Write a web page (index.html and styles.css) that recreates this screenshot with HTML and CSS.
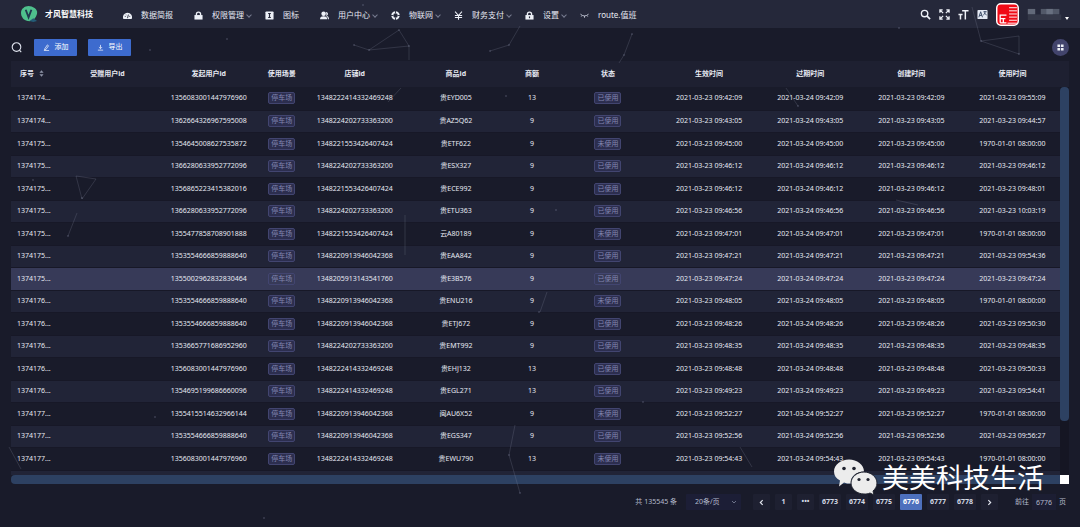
FILE: index.html
```html
<!DOCTYPE html>
<html lang="zh-CN">
<head>
<meta charset="utf-8">
<title>才风智慧科技</title>
<link rel="stylesheet" href="styles.css">
</head>
<body>
<div class="page">
  <header class="topbar">
    <div class="brand">
      <svg class="brand-logo" viewBox="0 0 20 18"><path d="M1 7C1 3 5 0 9 0s10 3 9 8-5 9-10 8S1 11 1 7z" fill="#4fc08d"/><path d="M14 13l4 3-4 1-4-1z" fill="#245c77"/><path d="M6 4l3 8 3-8" fill="none" stroke="#22384f" stroke-width="2"/></svg>
      <span>才风智慧科技</span>
    </div>
    <nav class="menu">
      <a class="menu-item" href="#"><svg class="icon" viewBox="0 0 10 10"><path d="M.5 9a5 5 0 1 1 9 0z" fill="#eef1f8"/><path d="M5 8l1-4M2 6h1M7 6h1M3 3.500l.7.700" stroke="#25283a" stroke-width="1"/></svg><span>数据简报</span></a>
      <a class="menu-item sub" href="#"><svg class="icon" viewBox="0 0 10 10"><path d="M.5 4.500h9v5h-9z" fill="#eef1f8"/><path d="M2.700 5V3.500a2.300 2.300 0 0 1 4.600 0V5" fill="none" stroke="#eef1f8" stroke-width="1.500"/></svg><span>权限管理</span><i class="chevron"></i></a>
      <a class="menu-item" href="#"><svg class="icon" viewBox="0 0 10 10"><rect x=".5" y=".5" width="9" height="9" rx="1" fill="#eef1f8"/><path d="M3.500 2.800h3M5 3v4M3.500 7.200h3" stroke="#25283a" stroke-width="1.300"/></svg><span>图标</span></a>
      <a class="menu-item sub" href="#"><svg class="icon" viewBox="0 0 10 10" fill="#eef1f8"><circle cx="4" cy="3" r="2.500"/><path d="M0 9.300c0-3 2-3.600 4-3.600s4 .6 4 3.600zM6.500 1a2.200 2.200 0 0 1 .8 4.300C9 5.800 10 6.500 10 9.300H8.800c0-2-1-3-2-3.800C7.500 4 7 2.500 6.500 1z"/></svg><span>用户中心</span><i class="chevron"></i></a>
      <a class="menu-item sub" href="#"><svg class="icon" viewBox="0 0 10 10"><circle cx="5" cy="5" r="3.600" fill="none" stroke="#eef1f8" stroke-width="2.200"/><path d="M5 0v2.500M5 7.500V10M0 5h2.500M7.500 5H10" stroke="#25283a" stroke-width="1"/></svg><span>物联网</span><i class="chevron"></i></a>
      <a class="menu-item sub" href="#"><svg class="icon" viewBox="0 0 10 10"><path d="M1.200.8L5 5l3.800-4.200M5 5v4.800M1 5h8M1 7.300h8" fill="none" stroke="#eef1f8" stroke-width="1.200"/></svg><span>财务支付</span><i class="chevron"></i></a>
      <a class="menu-item sub" href="#"><svg class="icon" viewBox="0 0 10 10"><path d="M.5 4.500h9v5h-9z" fill="#eef1f8"/><path d="M2.700 5V3.500a2.300 2.300 0 0 1 4.600 0V5" fill="none" stroke="#eef1f8" stroke-width="1.500"/><path d="M5 6v2" stroke="#25283a" stroke-width="1.300"/></svg><span>设置</span><i class="chevron"></i></a>
      <a class="menu-item" href="#"><svg class="icon" viewBox="0 0 10 10"><path d="M.5 3.500Q5 7.500 9.500 3.500M5 5.500v2M2.200 5l-.8 1.200M7.800 5l.8 1.200" fill="none" stroke="#c5c9d8" stroke-width="1"/></svg><span>route.值班</span></a>
    </nav>
    <div class="tools">
      <button class="tool" aria-label="搜索"><svg viewBox="0 0 12 12" fill="none" stroke="#eef1f8"><circle cx="5" cy="5" r="3.500" stroke-width="1.500"/><path d="M7.500 7.500L11 11" stroke-width="1.800"/></svg></button>
      <button class="tool" aria-label="全屏"><svg viewBox="0 0 12 12" fill="none" stroke="#eef1f8" stroke-width="1.400"><path d="M1 4V1h3M8 1h3v3M11 8v3H8M4 11H1V8M1 1l3.500 3.500M11 1L7.500 4.500M11 11L7.500 7.500M1 11l3.500-3.500"/></svg></button>
      <button class="tool" aria-label="字号"><svg viewBox="0 0 12 12" fill="none" stroke="#eef1f8" stroke-width="1.600"><path d="M4.500 2h7M8 2v9.500M.5 6h4.500M2.700 6v5.500"/></svg></button>
      <button class="tool" aria-label="语言"><svg viewBox="0 0 12 12"><rect x=".5" y="1" width="11" height="10" rx="1" fill="#e4e9f4"/><path d="M2 9l2-6 2 6M2.800 7h2.400M7 3h3.500M8.700 2.500C8.700 5 8 6 7 6.500M8 4.500l2.500 2" fill="none" stroke="#30415e" stroke-width="1"/></svg></button>
      <svg class="avatar" viewBox="0 0 22 22"><rect x=".7" y=".7" width="20.600" height="20.600" rx="4" fill="#f00a16" stroke="#fff" stroke-width="1.400"/><path d="M4 19V11.500h6M4 15h5M7 15v4M4 19h6" fill="none" stroke="#fff" stroke-width="1.200"/><path d="M12.500 4.500H20M12.500 7.500H20M12.500 10.500H20M12.500 13.500H20M12.500 16.500H20M11 19.300h9" fill="none" stroke="#fff" stroke-width=".9"/></svg>
      <svg class="username" viewBox="0 0 36 14"><path d="M0 1h8v6H0z" fill="#626979"/><path d="M14 1h20v6H14z" fill="#525969"/><path d="M20 1h7v6h-7z" fill="#687080"/><path d="M0 7h36v6H0z" fill="#343848"/></svg>
      <i class="caret"></i>
    </div>
  </header>

  <main class="content">
    <div class="toolbar">
      <button class="find" aria-label="筛选"><svg viewBox="0 0 12 12" fill="none" stroke="#dfe3ee" stroke-width="1.200"><circle cx="6" cy="5.500" r="4.700"/><path d="M9.200 9l2 2"/></svg></button>
      <button class="action"><svg viewBox="0 0 8 8" fill="none" stroke="#fff" stroke-width=".8"><path d="M2 5.500L5 1l1.300 1L3.400 6.300 1.800 6.800zM1 7.500h6"/></svg>添加</button>
      <button class="action"><svg viewBox="0 0 8 8" fill="none" stroke="#fff" stroke-width=".8"><path d="M4 1v4M2.200 3.500L4 5.300l1.800-1.800M1 7h6"/></svg>导出</button>
      <button class="columns" aria-label="列设置"><svg viewBox="0 0 8 8" fill="#eef1f8"><path d="M.5.5h3v3h-3zM4.500.5h3v3h-3zM.5 4.500h3v3h-3zM4.500 4.500h3v3h-3z"/></svg></button>
    </div>

    <div class="grid">
      <div class="grid-view">
        <table class="data">
          <colgroup><col class="c-seq"><col><col><col class="c-scene"><col><col><col class="c-amount"><col><col><col><col><col></colgroup>
          <thead><tr><th class="seq">序号<svg class="sort" viewBox="0 0 6 8" fill="#8f94a8"><path d="M3 0l2.500 3h-5zM3 8l2.500-3h-5z"/></svg></th><th>受赠用户id</th><th>发起用户id</th><th>使用场景</th><th>店铺id</th><th>商品id</th><th>商额</th><th>状态</th><th>生效时间</th><th>过期时间</th><th>创建时间</th><th>使用时间</th></tr></thead>
          <tbody id="rows"></tbody>
        </table>
      </div>
      <div class="track-v"><div class="thumb-v"></div></div>
      <div class="track-h"></div>
      <div class="corner"></div>
    </div>

    <footer class="pager">
      <span class="total">共 135545 条</span>
      <select class="size" aria-label="每页条数"><option>20条/页</option></select>
      <button class="pg narrow" aria-label="上一页"><svg viewBox="0 0 6 6"><path d="M4 1L2 3l2 2"/></svg></button>
      <button class="pg narrow">1</button>
      <button class="pg narrow">•••</button>
      <button class="pg">6773</button>
      <button class="pg">6774</button>
      <button class="pg">6775</button>
      <button class="pg active">6776</button>
      <button class="pg">6777</button>
      <button class="pg">6778</button>
      <button class="pg narrow" aria-label="下一页"><svg viewBox="0 0 6 6"><path d="M2 1l2 2-2 2"/></svg></button>
      <label class="jump">前往<input value="6776">页</label>
    </footer>
  </main>

  <svg class="net" viewBox="0 0 1080 527" preserveAspectRatio="none">
    <path d="M354 45l15 5 30-20 10 16v14M369 50l40-4M490 51l19-6 11-19M632 34l-8 21-5 8M76 75M76 176l20 3-14 20zM77 213l-9 23M972 7l9 34 38-5v18l-38-13M401 88l-13 14M786 88l12 18M405 215v40M547 292l-7 20M515 425l-6 30 11 38M9 447l12 22M740 447l12 20M896 200l22 5"/>
    <g><circle cx="354" cy="45" r="1"/><circle cx="369" cy="50" r="1"/><circle cx="399" cy="30" r="1"/><circle cx="409" cy="46" r="1"/><circle cx="490" cy="51" r="1"/><circle cx="509" cy="45" r="1"/><circle cx="624" cy="55" r="1"/><circle cx="632" cy="34" r="1"/><circle cx="363" cy="5" r="1"/><circle cx="227" cy="39" r="1"/><circle cx="150" cy="50" r="1"/><circle cx="82" cy="198" r="1"/><circle cx="33" cy="180" r="1"/><circle cx="68" cy="236" r="1"/><circle cx="506" cy="96" r="1"/><circle cx="556" cy="210" r="1"/><circle cx="539" cy="312" r="1"/><circle cx="643" cy="402" r="1"/><circle cx="155" cy="417" r="1"/><circle cx="264" cy="518" r="1"/><circle cx="509" cy="455" r="1"/><circle cx="520" cy="493" r="1"/><circle cx="981" cy="41" r="1"/><circle cx="1019" cy="54" r="1"/><circle cx="798" cy="106" r="1"/><circle cx="899" cy="28" r="1"/></g>
  </svg>

  <div class="watermark">
    <svg viewBox="0 0 44 36"><path d="M15 0c8 0 15 5 15 12-8 0-14 5-13 12-3 0-5 0-7-1l-5 4 1-6C2 19 0 16 0 12 0 5 7 0 15 0z" fill="#ececec"/><path d="M30 12.500c7 0 13 5 13 11 0 4-2 6-4 8l1 4-4-2c-2 1-4 1-6 1-7 0-13-5-13-11s6-11 13-11z" fill="#ececec" stroke="#20232f"/><g fill="#20232f"><circle cx="10" cy="9" r="1.800"/><circle cx="20" cy="9" r="1.800"/><circle cx="25" cy="20" r="1.600"/><circle cx="34" cy="20" r="1.600"/></g></svg>
    <span>美美科技生活</span>
  </div>
</div>
<script src="rows.js"></script>
</body>
</html>
```
FILE: styles.css
```css
* { box-sizing: border-box; }
body {
  margin: 0;
  background: #191b2a;
  color: #e6e9f2;
  font: 7px/10px "Noto Sans", "Noto Sans CJK SC", sans-serif;
}
button, select, input { font: inherit; color: inherit; border: 0; margin: 0; padding: 0; background: none; }
svg { display: block; }
.page { position: relative; display: flex; flex-direction: column; height: 100vh; overflow: hidden; }

.topbar { display: flex; align-items: center; height: 28px; flex: none; padding: 0 11px 0 20px; background: #25283a; }
.brand { display: flex; align-items: center; gap: 6px; width: 103px; font-size: 8px; font-weight: 700; color: #fff; white-space: nowrap; }
.brand-logo { width: 19px; height: 17px; }
.menu { display: flex; align-items: center; flex: 1; padding-top: 2px; font-size: 8px; }
.menu-item { display: flex; align-items: center; padding-right: 21px; color: #e6e9f2; text-decoration: none; white-space: nowrap; }
.menu-item.sub { padding-right: 14px; }
.icon { width: 9px; height: 9px; margin-right: 9px; }
.chevron { width: 4px; height: 4px; margin: 0 0 1px 3px; border: solid #777c90; border-width: 0 1px 1px 0; transform: rotate(45deg); }
.tools { display: flex; align-items: center; gap: 8px; }
.tool svg { width: 11px; height: 11px; }
.avatar { width: 23px; height: 23px; }
.username { width: 35px; height: 13px; }
.caret { align-self: flex-end; margin: 0 0 6px -5px; border: solid transparent; border-width: 3px 2px 0; border-top-color: #fff; }

.content { display: flex; flex-direction: column; flex: 1; min-height: 0; padding: 0 11px; }
.toolbar { display: flex; align-items: center; height: 33px; flex: none; padding-top: 5px; }
.find { margin-right: 12px; }
.find svg { width: 11px; height: 11px; }
.action { display: flex; align-items: center; justify-content: center; gap: 5px; width: 43px; height: 17px; margin-right: 11px; border-radius: 1px; background: #3d6bce; color: #fff; }
.action svg { width: 7px; height: 7px; }
.columns { display: grid; place-items: center; width: 17px; height: 17px; margin-left: auto; border-radius: 50%; background: #42446c; }
.columns svg { width: 7px; height: 7px; }

.grid { display: grid; grid-template: minmax(0, 1fr) 9px / minmax(0, 1fr) 9px; flex: 1; min-height: 0; }
.grid-view { overflow: hidden; }
.data { width: calc(100% + 3px); table-layout: fixed; border-collapse: collapse; text-align: center; white-space: nowrap; }
.c-seq { width: 46px; }
.c-scene { width: 45px; }
.c-amount { width: 51px; }
.data th, .data td { padding: 0; }
.data thead { background: #1e2031; }
.data th { height: 26px; font-weight: 700; }
.data .seq { padding-left: 9px; text-align: left; }
.data td.seq { padding-left: 6px; }
.sort { display: inline-block; width: 5px; height: 7px; margin-left: 5px; vertical-align: -1px; }
.data td { height: 23px; border-bottom: 1px solid #171827; }
.data tbody tr:nth-child(even) { background: #212437; }
.data tbody tr:nth-child(even) td { height: 22px; }
.data tbody tr.current { background: #373a58; }
.tag { display: inline-block; padding: 0 2px; border: 1px solid #424570; border-radius: 2px; background: #2c2e4f; color: #8286b0; vertical-align: middle; }
.current .tag { background: #373a58; }
.track-v { padding-top: 26px; background: linear-gradient(#1e2031 26px, #151623 26px); }
.thumb-v { height: 86%; border-radius: 4px; background: #2d4162; }
.track-h { border-radius: 4px 0 0 4px; background: #2d4162; }
.corner { background: #fff; }

.pager { display: flex; align-items: center; justify-content: flex-end; gap: 5px; height: 43px; flex: none; padding: 0 3px 7px 0; color: #b4bacb; }
.total { margin-right: 4px; }
.size { width: 55px; height: 16px; margin-right: 7px; padding: 0 9px; appearance: none; border-radius: 1px; background: url("data:image/svg+xml,%3Csvg xmlns='http://www.w3.org/2000/svg' viewBox='0 0 6 6'%3E%3Cpath d='M1 2l2 2 2-2' fill='none' stroke='%236c7289'/%3E%3C/svg%3E") right 4px center / 6px 6px no-repeat #1c1e36; }
.pg { display: grid; place-items: center; width: 22px; height: 16px; border-radius: 1px; background: #1e2031; color: #d3d8e4; font-weight: 700; }
.pg.narrow { width: 17px; }
.pg.active { background: #4d70bd; color: #fff; }
.pg svg { width: 7px; height: 7px; fill: none; stroke: #e4e7f0; stroke-width: 1; }
.jump { display: flex; align-items: center; gap: 3px; margin-left: 12px; }
.jump input { width: 24px; height: 16px; text-align: center; background: #1c1e33; }

.net { position: absolute; inset: 0; width: 100%; height: 100%; pointer-events: none; fill: none; stroke: #8b90a8; stroke-opacity: .22; }
.net g { fill: #8b90a8; fill-opacity: .3; stroke: none; }
.watermark { position: absolute; right: 36px; bottom: 31px; display: flex; align-items: center; gap: 4px; color: #fff; font-size: 27px; line-height: 36px; white-space: nowrap; pointer-events: none; }
.watermark svg { width: 44px; height: 37px; }
```
FILE: rows.js
```js
const D = "2021-03-23 ", N = "2021-03-24 ", UNUSED = "1970-01-01 08:00:00";
const data = [
  ["1374174...", "1356083001447976960", "1348222414332469248", "贵EYD005", 13, "09:42:09", "09:55:09"],
  ["1374174...", "1362664326967595008", "1348224202733363200", "贵AZ5Q62", 9, "09:43:05", "09:44:57"],
  ["1374175...", "1354645008627535872", "1348221553426407424", "贵ETF622", 9, "09:45:00", ""],
  ["1374175...", "1366280633952772096", "1348224202733363200", "贵ESX327", 9, "09:46:12", "09:46:12"],
  ["1374175...", "1356865223415382016", "1348221553426407424", "贵ECE992", 9, "09:46:12", "09:48:01"],
  ["1374175...", "1366280633952772096", "1348224202733363200", "贵ETU363", 9, "09:46:56", "10:03:19"],
  ["1374175...", "1355477858708901888", "1348221553426407424", "云A80189", 9, "09:47:01", ""],
  ["1374175...", "1353554666859888640", "1348220913946042368", "贵EAA842", 9, "09:47:21", "09:54:36"],
  ["1374175...", "1355002962832830464", "1348205913143541760", "贵E3B576", 9, "09:47:24", "09:47:24"],
  ["1374176...", "1353554666859888640", "1348220913946042368", "贵ENU216", 9, "09:48:05", ""],
  ["1374176...", "1353554666859888640", "1348220913946042368", "贵ETJ672", 9, "09:48:26", "09:50:30"],
  ["1374176...", "1353665771686952960", "1348224202733363200", "贵EMT992", 9, "09:48:35", "09:48:35"],
  ["1374176...", "1356083001447976960", "1348222414332469248", "贵EHJ132", 13, "09:48:48", "09:50:33"],
  ["1374176...", "1354695199686660096", "1348222414332469248", "贵EGL271", 13, "09:49:23", "09:54:41"],
  ["1374177...", "1355415514632966144", "1348220913946042368", "闽AU6X52", 9, "09:52:27", ""],
  ["1374177...", "1353554666859888640", "1348220913946042368", "贵EGS347", 9, "09:52:56", "09:56:27"],
  ["1374177...", "1356083001447976960", "1348222414332469248", "贵EWU790", 13, "09:54:43", ""]
];
const tag = t => `<span class="tag">${t}</span>`;
document.getElementById("rows").innerHTML = data.map(([seq, user, shop, item, sum, made, used], i) => {
  const cells = ["", user, tag("停车场"), shop, item, sum, tag(used ? "已使用" : "未使用"), D + made, N + made, D + made, used ? D + used : UNUSED];
  return `<tr${i === 8 ? ' class="current"' : ""}><td class="seq">${seq}</td>${cells.map(c => `<td>${c}</td>`).join("")}</tr>`;
}).join("") + "<tr>" + "<td></td>".repeat(12) + "</tr>";
```
